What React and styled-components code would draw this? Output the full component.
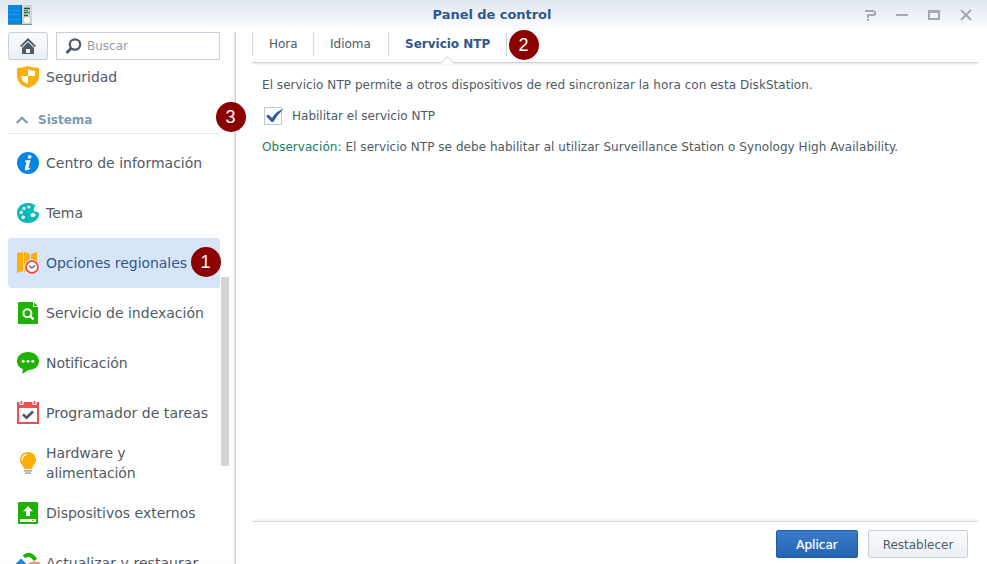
import React from "react";
import styled, { createGlobalStyle, css } from "styled-components";

const Global = createGlobalStyle`
  * { box-sizing: border-box; }
  html, body, #root { height: 100%; margin: 0; }
  body { overflow: hidden; background: #fff; color: #505a64; font: 12px/20px "DejaVu Sans", Verdana, sans-serif; }
  svg { display: block; flex: none; }
`;

const Window = styled.div`
  position: relative;
  width: 987px;
  height: 564px;
  display: flex;
  flex-direction: column;
  overflow: hidden;
  background: linear-gradient(#dfe6ef, #fff 31px);
`;
const TitleBar = styled.header`
  flex: none;
  height: 32px;
  display: grid;
  grid-template-columns: 120px 1fr 120px;
  padding: 0 15px 0 12px;
`;
const AppIcon = styled.div`
  padding-top: 4px;
  margin-left: -4px;
`;
const Title = styled.h1`
  margin: 0;
  padding-top: 5px;
  text-align: center;
  font-size: 13px;
  line-height: 20px;
  color: #30588a;
  letter-spacing: ${(p) => p.$track}px;
`;
const WindowTools = styled.div`
  display: flex;
  justify-content: flex-end;
  gap: 20px;
  padding-top: 9px;
`;
const Body = styled.div`
  flex: 1;
  min-height: 0;
  display: flex;
`;
const Sidebar = styled.aside`
  width: 236px;
  flex: none;
  display: flex;
  flex-direction: column;
  border-right: 1px solid #cfcfd0;
  box-shadow: inset -2px 0 2px -1px #e4e4e4;
`;
const SearchRow = styled.div`
  display: flex;
  gap: 8px;
  padding-left: 8px;
  height: 28px;
  flex: none;
`;
const HomeButton = styled.button`
  width: 40px;
  height: 28px;
  padding: 0;
  display: grid;
  place-items: center;
  border: 1px solid #c6d0dc;
  border-radius: 3px;
  background: linear-gradient(#f8fbfd, #ebf0f5);
`;
const SearchBox = styled.label`
  width: 164px;
  height: 28px;
  display: flex;
  align-items: center;
  gap: 5px;
  padding-left: 8px;
  border: 1px solid #c6d0dc;
  background: #fff;
  color: #969da5;
`;
const ListArea = styled.div`
  flex: 1;
  min-height: 0;
  display: flex;
  overflow: hidden;
`;
const Nav = styled.nav`
  width: 212px;
  margin: -8px 0 0 8px;
  flex: none;
`;
const NavItem = styled.a`
  height: 50px;
  display: flex;
  align-items: center;
  gap: 6px;
  padding-left: 8px;
  border-radius: 3px;
  font-size: 14px;
  line-height: 20px;
  white-space: pre-line;
  ${(p) => p.$selected && css`background: #d6e6f8; color: #30588a;`}
`;
const NavLabel = styled.span`
  letter-spacing: ${(p) => p.$track || 0}px;
`;
const NavGroup = styled.div`
  height: 32px;
  margin-bottom: 4px;
  padding: 4px 0 0 8px;
  border-bottom: 1px solid #e8ebee;
  display: flex;
  align-items: center;
  gap: 10px;
  font-weight: bold;
  color: #7b9bb5;
`;
const ScrollThumb = styled.div`
  width: 8px;
  height: 189px;
  margin: 217px 0 0 1px;
  background: #d3d5d7;
`;
const Main = styled.main`
  flex: 1;
  min-width: 0;
  margin: 0 9px 0 16px;
  display: flex;
  flex-direction: column;
`;
const Tabs = styled.div`
  position: relative;
  height: 31px;
  flex: none;
  display: flex;
  border-bottom: 1px solid #d2d5d7;
  box-shadow: 0 2px 2px -1px #e4e4e4;
`;
const Tab = styled.div`
  width: ${(p) => p.$width}px;
  height: 24px;
  line-height: 24px;
  padding-left: ${(p) => p.$pad}px;
  border-left: 1px solid #d3dade;
  letter-spacing: ${(p) => p.$track || 0}px;
  ${(p) => p.$active && css`font-weight: bold; color: #30588a;`}
`;
const TabNotch = styled.svg`
  position: absolute;
  left: 189px;
  top: 24px;
`;
const Content = styled.section`
  flex: 1;
  padding: 12px 10px;
`;
const Line = styled.p`
  margin: 0;
  height: 31px;
  display: flex;
  white-space: nowrap;
  letter-spacing: ${(p) => p.$track}px;
`;
const Note = styled.span`
  color: #14805e;
  margin-right: 4px;
`;
const CheckRow = styled.label`
  display: flex;
  height: 31px;
  gap: 8px;
  padding-left: 2px;
`;
const Footer = styled.footer`
  flex: none;
  height: 43px;
  display: flex;
  justify-content: flex-end;
  gap: 10px;
  padding: 8px 10px 0 0;
  border-top: 1px solid #d5d7d8;
  box-shadow: 0 -2px 2px -1px #e9e9e9;
`;
const Button = styled.button`
  width: ${(p) => p.$width}px;
  height: 28px;
  padding: 2px 0 0;
  border: 1px solid ${(p) => (p.$primary ? "#1f5da8" : "#c6d0dc")};
  border-radius: 2px;
  font: inherit;
  color: ${(p) => (p.$primary ? "#fff" : "#505a64")};
  background: ${(p) => (p.$primary ? "linear-gradient(#3a7dcc, #2463b0)" : "linear-gradient(#f8fbfd, #ebf0f5)")};
  text-shadow: ${(p) => (p.$primary ? "0 0 1px rgba(255, 255, 255, 0.6)" : "none")};
`;
const Badge = styled.div`
  position: absolute;
  left: ${(p) => p.$x}px;
  top: ${(p) => p.$y}px;
  width: 30px;
  height: 30px;
  border-radius: 50%;
  background: #8b0000;
  color: #fff;
  text-align: center;
  font: 18px/30px "Liberation Sans", Arial, sans-serif;
`;

const Svg = ({ children }) => <svg width="24" height="24" viewBox="0 0 24 24" fill="none">{children}</svg>;

const ShieldIcon = () => (
  <Svg>
    <path d="M1 3Q6 3 12 1Q18 3 23 3V12Q22 20 12 23Q2 20 1 12Z" fill="#ffad08" />
    <path d="M12 4V11H5V6Q9 6 12 4ZM12 11H19Q19 17 12 19Z" fill="#fff" transform="matrix(-1 0 0 1 24 0)" />
  </Svg>
);
const InfoIcon = () => (
  <Svg>
    <circle cx="12" cy="12" r="11" fill="#0784e8" />
    <circle cx="13.6" cy="5.8" r="1.9" fill="#fff" />
    <path d="M9 9.5L14.5 9L12.4 17.2Q12.6 17.8 14.5 16.4L14.8 17Q12.5 19.6 10 19.4Q8.4 19 8.9 17.2L10.6 10.8H8.8Z" fill="#fff" />
  </Svg>
);
const ThemeIcon = () => (
  <Svg>
    <path d="M12 2C5 2 1 6.5 1 12S5 22 12 22C19 22 23 17.5 23 12.8C22 9.8 18 12 17.6 8.8C17.5 7 19 6 19.2 4.2C17 2.5 14.5 2 12 2Z" fill="#08b8bb" />
    <g fill="#fff">
      <circle cx="12.8" cy="6" r="1.6" /><circle cx="8" cy="7.4" r="1.6" />
      <circle cx="5.2" cy="11.4" r="1.6" /><circle cx="7.2" cy="16.2" r="1.8" />
      <ellipse cx="17" cy="14" rx="2.7" ry="2" />
    </g>
  </Svg>
);
const RegionIcon = () => (
  <Svg>
    <path d="M1 2L7 1V20L1 22ZM8 1L14 3V22L8 20ZM15 3L21 1V20L15 22Z" fill="#ffad08" />
    <circle cx="16" cy="16" r="7.8" fill="#fff" />
    <circle cx="16" cy="16" r="6" fill="#fff" stroke="#e94e50" strokeWidth="1.9" />
    <path d="M13 14.6L15.8 17L19 14.6" stroke="#4b5662" strokeWidth="1.2" />
  </Svg>
);
const IndexIcon = () => (
  <Svg>
    <path d="M3 1H17V6H22V22Q22 23 21 23H3Q2 23 2 22V2Q2 1 3 1ZM18 1.5L21.5 5H18Z" fill="#1db100" />
    <circle cx="11.4" cy="12.2" r="4" stroke="#fff" strokeWidth="2" />
    <path d="M14.2 15L17.5 18.5" stroke="#fff" strokeWidth="2.4" />
  </Svg>
);
const ChatIcon = () => (
  <Svg>
    <path d="M12 1C5.5 1 1 5 1 10C1 14 3.4 16.8 7 18.2L6.2 23L12.5 19C19 19 23 15 23 10S18.5 1 12 1Z" fill="#1db100" />
    <g fill="#fff"><circle cx="7.2" cy="10.3" r="1.5" /><circle cx="12" cy="10.3" r="1.5" /><circle cx="16.8" cy="10.3" r="1.5" /></g>
  </Svg>
);
const CalendarIcon = () => (
  <Svg>
    <path d="M1 1H23V23H1Z" fill="#f04e50" />
    <path d="M3.5 0H7.5V4H3.5ZM16.5 0H20.5V4H16.5ZM3 7H21V21H3Z" fill="#fff" />
    <path d="M4.7 0H6.3V3H4.7ZM17.7 0H19.3V3H17.7Z" fill="#f04e50" />
    <path d="M7 13.5L10.6 16.7L17 10.5" stroke="#4b5662" strokeWidth="2.5" />
  </Svg>
);
const BulbIcon = () => (
  <Svg>
    <path d="M12 1C7 1 4 4.6 4 9C4 13 7.6 14.5 8 18H16C16.4 14.5 20 13 20 9C20 4.6 17 1 12 1Z" fill="#ffad08" />
    <path d="M6 9Q6.2 4.5 10.5 3.3" stroke="#fff" strokeWidth="1.3" strokeLinecap="round" />
    <path d="M8 19.8H16M9 22.2H15" stroke="#87919b" strokeWidth="1.2" />
  </Svg>
);
const DeviceIcon = () => (
  <Svg>
    <rect x="2" y="1" width="20" height="22" rx="1" fill="#1db100" />
    <path d="M12 5L17 10.2H14V15H10V10.2H7Z" fill="#fff" />
    <path d="M4 18H20V21H4Z" fill="#fff" /><path d="M16 19H18V20H16Z" fill="#ff8c00" />
  </Svg>
);
const UpdateIcon = () => (
  <Svg>
    <path d="M8 5.8Q14 .5 19.5 9" stroke="#1db100" strokeWidth="4" />
    <path d="M0 12.5L5 7.5L10 12.5V15H0Z" fill="#2584dc" />
    <path d="M11 14Q13 10 19 10.5Q24 10.5 26 14Z" fill="#f58f8c" />
  </Svg>
);

const items = [
  { label: "Centro de información", Icon: InfoIcon },
  { label: "Tema", Icon: ThemeIcon },
  { label: "Opciones regionales", Icon: RegionIcon, selected: true, track: -0.05 },
  { label: "Servicio de indexación", Icon: IndexIcon },
  { label: "Notificación", Icon: ChatIcon, track: -0.08 },
  { label: "Programador de tareas", Icon: CalendarIcon, track: 0.04 },
  { label: "Hardware y\nalimentación", Icon: BulbIcon, track: -0.08 },
  { label: "Dispositivos externos", Icon: DeviceIcon },
  { label: "Actualizar y restaurar", Icon: UpdateIcon, track: 0.06 },
];

const PanelIcon = () => (
  <svg width="24" height="22" viewBox="0 0 24 22">
    <path d="M0 1H13V20H0Z" fill="#0788df" /><path d="M13 1H14V20H13Z" fill="#0767ae" />
    <path d="M14 1H24V20H14Z" fill="#cbd6d9" /><path d="M0 20H24V21H0Z" fill="#7d9295" />
    <path d="M1 6.5H3M4 6.5H12M1 10.5H3M4 10.5H12M1 15.5H3M4 15.5H12" stroke="#32aaf5" strokeOpacity=".7" />
    <path d="M16 4.5H22M16 8.5H22M16 11.5H20" stroke="#34474e" strokeWidth="1.3" />
    <path d="M16 6.5H20M18 8.5H22" stroke="#49b54a" strokeWidth="1.3" /><circle cx="19" cy="16" r="3" fill="#fff" />
  </svg>
);

export default function App() {
  return (
    <Window>
      <Global />
      <TitleBar>
        <AppIcon><PanelIcon /></AppIcon>
        <Title $track={-0.05}>Panel de control</Title>
        <WindowTools>
          <svg width="12" height="12" fill="#a3a9b1"><path d="M1 1H10V2H12V6H11V7H5V9H3V5H10V3H1ZM3 10H5V12H3Z" /></svg>
          <svg width="12" height="12" fill="#a3a9b1"><path d="M0 5H12V7H0Z" /></svg>
          <svg width="12" height="12" fill="#a3a9b1"><path fillRule="evenodd" d="M0 1H12V11H0ZM2 4V9H10V4Z" /></svg>
          <svg width="12" height="12" stroke="#a3a9b1" strokeWidth="2"><path d="M1 1L11 11M11 1L1 11" /></svg>
        </WindowTools>
      </TitleBar>
      <Body>
        <Sidebar>
          <SearchRow>
            <HomeButton aria-label="Inicio">
              <svg width="16" height="16" viewBox="0 0 16 16" fill="#505a64">
                <path d="M8 0L16 8L14.7 9.2L8 2.7L1.3 9.2L0 8Z" />
                <path fillRule="evenodd" d="M8 4L14 10V16H2V10ZM6 11V15H10V11Z" />
              </svg>
            </HomeButton>
            <SearchBox>
              <svg width="17" height="17" viewBox="0 0 17 17" fill="none" stroke="#505a64">
                <circle cx="10" cy="6.5" r="5.2" strokeWidth="2.2" /><path d="M6 10.5L1.5 15" strokeWidth="3" />
              </svg>
              Buscar
            </SearchBox>
          </SearchRow>
          <ListArea>
            <Nav>
              <NavItem><ShieldIcon /><NavLabel>Seguridad</NavLabel></NavItem>
              <NavGroup>
                <svg width="12" height="8" fill="none" stroke="#7b9bb5" strokeWidth="2"><path d="M.7 7L6 1.7L11.3 7" /></svg>
                Sistema
              </NavGroup>
              {items.map(({ label, Icon, selected, track }) => (
                <NavItem key={label} $selected={selected}><Icon /><NavLabel $track={track}>{label}</NavLabel></NavItem>
              ))}
            </Nav>
            <ScrollThumb />
          </ListArea>
        </Sidebar>
        <Main>
          <Tabs>
            <Tab $width={61} $pad={16}>Hora</Tab>
            <Tab $width={75} $pad={16}>Idioma</Tab>
            <Tab $width={118} $pad={16} $active>Servicio NTP</Tab>
            <Tab $width={2} $pad={0} />
            <TabNotch width="13" height="8"><path d="M0 7.5L6.5 1L13 7.5V8H0Z" fill="#fff" /><path d="M0 7L6.5.7L13 7" fill="none" stroke="#ced1d3" /></TabNotch>
          </Tabs>
          <Content>
            <Line $track={0.045}>El servicio NTP permite a otros dispositivos de red sincronizar la hora con esta DiskStation.</Line>
            <CheckRow>
              <svg width="20" height="20" viewBox="0 0 20 20">
                <rect x=".5" y="1.5" width="17" height="17" fill="#fff" stroke="#c0cbd8" />
                <path d="M2 10L4.5 8.5L8 12Q12 5 19.5 3Q14 8 9.2 16H7.5Z" fill="#30609b" />
              </svg>
              Habilitar el servicio NTP
            </CheckRow>
            <Line $track={0.04}><Note>Observación:</Note>El servicio NTP se debe habilitar al utilizar Surveillance Station o Synology High Availability.</Line>
          </Content>
          <Footer>
            <Button $primary $width={82}>Aplicar</Button>
            <Button $width={100}>Restablecer</Button>
          </Footer>
        </Main>
      </Body>
      <Badge $x={190.5} $y={247}>1</Badge>
      <Badge $x={508.5} $y={29.5}>2</Badge>
      <Badge $x={215.5} $y={101.5}>3</Badge>
    </Window>
  );
}
